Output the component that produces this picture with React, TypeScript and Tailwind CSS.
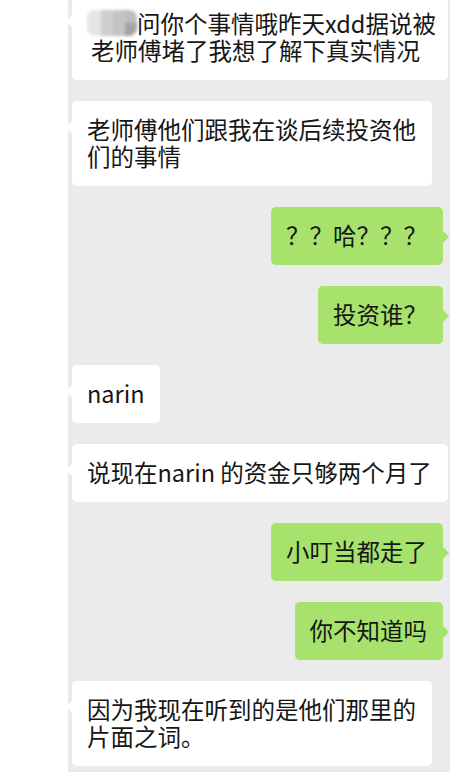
import type { ReactNode } from "react";

const font = { fontFamily: '"Noto Sans CJK SC", "Noto Sans", sans-serif' };

function Bubble({
  side,
  className = "",
  children,
}: {
  side: "left" | "right";
  className?: string;
  children: ReactNode;
}) {
  const isLeft = side === "left";
  return (
    <div
      className={`relative shrink-0 whitespace-nowrap rounded-[5px] pt-[15px] pb-[16px] pl-[15px] pr-[16px] text-[23.5px] leading-[27px] text-[#161616] ${
        isLeft ? "self-start bg-white" : "self-end bg-[#a6e26c]"
      } ${className}`}
    >
      {children}
      {isLeft ? (
        <span className="absolute left-[-6px] top-[20px] h-0 w-0 border-y-[6px] border-r-[6px] border-y-transparent border-r-white" />
      ) : (
        <span className="absolute right-[-6px] top-[24px] h-0 w-0 border-y-[6px] border-l-[6px] border-y-transparent border-l-[#a6e26c]" />
      )}
    </div>
  );
}

function BlurredName() {
  return (
    <span className="inline-flex h-[26px] w-[50px] overflow-hidden rounded-[8px] align-top blur-[1.5px]">
      <span className="h-full w-[14px] bg-[#e6e6e6]" />
      <span className="h-full w-[12px] bg-[#cfcfcf]" />
      <span className="h-full w-[12px] bg-[#c4c4c4]" />
      <span className="flex h-full w-[12px] flex-col">
        <span className="h-1/2 bg-[#bdbdbd]" />
        <span className="h-1/2 bg-[#a3a3a3]" />
      </span>
    </span>
  );
}

export default function App() {
  return (
    <div className="flex h-[772px] w-[468px] overflow-hidden bg-white" style={font}>
      <div className="w-[68px] shrink-0" />
      <div className="flex h-full w-[382px] shrink-0 flex-col gap-[21px] bg-[#ebebeb] pl-[4px] pr-[7px]">
        <Bubble side="left" className="-mt-[5px] w-[376px] pl-[11px]">
          <BlurredName />
          问你个事情哦昨天xdd据说被
          <br />
          <span className="pl-[4px]">老师傅堵了我想了解下真实情况</span>
        </Bubble>
        <Bubble side="left">
          老师傅他们跟我在谈后续投资他
          <br />
          们的事情
        </Bubble>
        <Bubble side="right">？？哈？？？</Bubble>
        <Bubble side="right">投资谁？</Bubble>
        <Bubble side="left">narin</Bubble>
        <Bubble side="left">说现在narin 的资金只够两个月了</Bubble>
        <Bubble side="right">小叮当都走了</Bubble>
        <Bubble side="right">你不知道吗</Bubble>
        <Bubble side="left">
          因为我现在听到的是他们那里的
          <br />
          片面之词。
        </Bubble>
      </div>
    </div>
  );
}
